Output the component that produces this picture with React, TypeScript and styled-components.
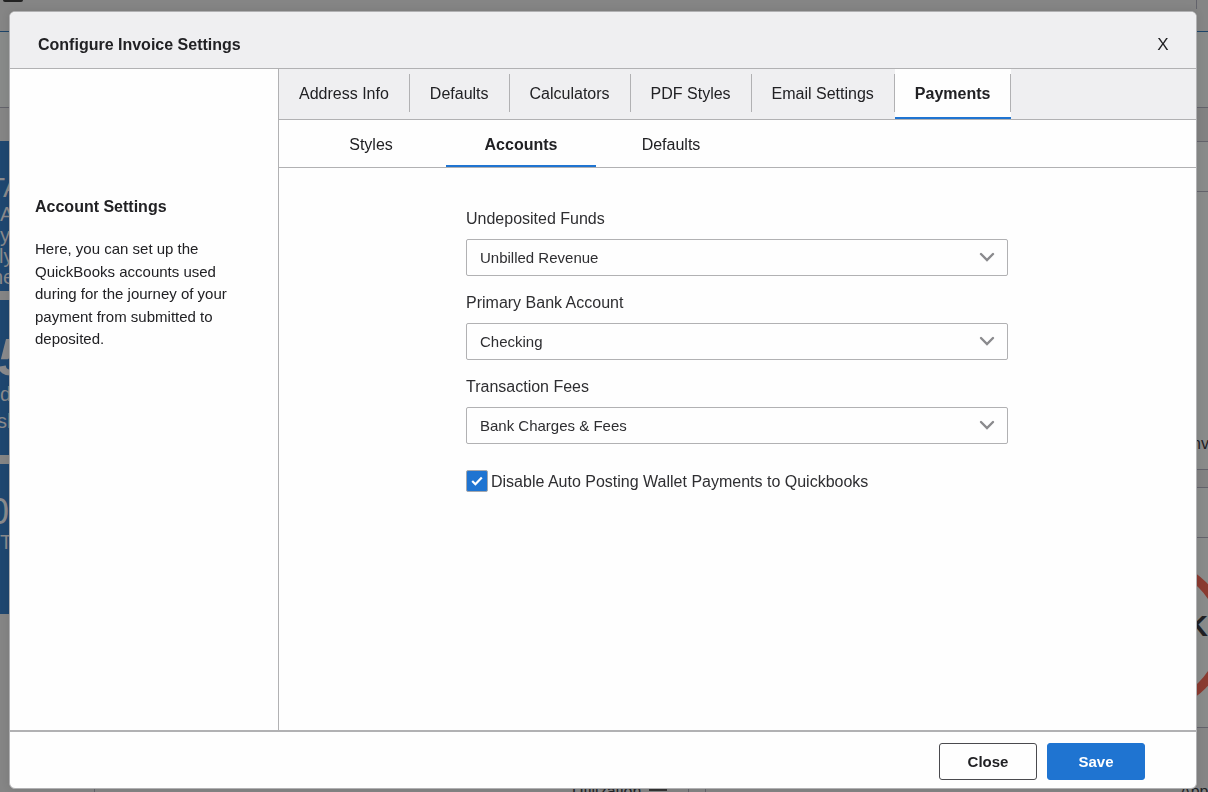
import React, { useState } from "react";
import styled, { createGlobalStyle, css } from "styled-components";

const line = "#b1b1b3";
const blue = "#1f74d1";
const ink = "#212124";
const dimLine = "#63636b";

const GlobalStyle = createGlobalStyle`
  *, *::before, *::after { box-sizing: border-box; }
  body {
    margin: 0;
    background: #858585;
    font-family: "Liberation Sans", Arial, Helvetica, sans-serif;
    font-size: 16px;
    color: ${ink};
    overflow: hidden;
  }
  button, input, select { font-family: inherit; color: inherit; }
`;

/* Dimmed dashboard under the dialog */

const Dashboard = styled.div`
  height: 100vh;
  display: flex;
  flex-direction: column;
  overflow: hidden;
`;

const TopBar = styled.div`
  display: flex;
  justify-content: space-between;
  height: 32px;
  flex: none;
  border-bottom: 1px solid #1d4469;
`;

const MenuMark = styled.div`
  width: 20px;
  height: 2px;
  margin-left: 3px;
  border-radius: 0 0 3px 3px;
  background: #222;
`;

const TopCell = styled.div`
  width: 12px;
  height: 9px;
  border-left: 1px solid ${dimLine};
`;

const FilterBar = styled.div`
  height: 76px;
  flex: none;
  border-bottom: 1px solid ${dimLine};
  background: #888a89;
`;

const Columns = styled.div`
  display: flex;
  justify-content: space-between;
  height: 676px;
  flex: none;
`;

const CardColumn = styled.div`
  display: flex;
  flex-direction: column;
  gap: 9px;
  width: 94px;
  padding-top: 33px;
`;

const Card = styled.div<{ $height: number; $top: number }>`
  height: ${(p) => p.$height}px;
  padding-top: ${(p) => p.$top}px;
  background: #1f4770;
  color: #8a8a8c;
  overflow: hidden;
  white-space: nowrap;
`;

const CardFigure = styled.div<{ $strong?: boolean }>`
  font-size: 36px;
  line-height: 40px;
  text-indent: -11px;
  ${(p) =>
    p.$strong &&
    css`
      font-size: 52px;
      font-weight: bold;
      font-style: italic;
      text-indent: -2px;
    `}
`;

const CardTitle = styled.div`
  font-size: 28px;
  line-height: 32px;
  text-indent: -12px;
`;

const CardText = styled.div<{ $line?: number; $cut?: number }>`
  font-size: 20px;
  line-height: ${(p) => p.$line ?? 21}px;
  text-indent: ${(p) => -(p.$cut ?? 0)}px;
`;

const SideColumn = styled.div`
  width: 12px;
  display: flex;
  flex-direction: column;
`;

const SideCell = styled.div<{ $height: number; $light?: boolean }>`
  display: flex;
  align-items: flex-end;
  height: ${(p) => p.$height}px;
  flex: none;
  overflow: hidden;
  border-bottom: 1px solid ${dimLine};
  background: ${(p) => (p.$light ? "#898b8a" : "#828282")};
`;

const SideText = styled.span`
  font-size: 16px;
  line-height: 18px;
  padding-bottom: 16px;
  text-indent: -4px;
`;

const Gauge = styled.svg`
  display: block;
  width: 12px;
  height: 189px;
`;

const BottomRow = styled.div`
  display: grid;
  grid-template-columns: 94px 478px 116px 17px 1fr auto;
  height: 20px;
  flex: none;
  line-height: 16px;
`;

const BottomCell = styled.div<{ $rule?: boolean }>`
  display: flex;
  gap: 8px;
  border-left: ${(p) => (p.$rule ? `1px solid ${dimLine}` : "0")};
`;

const Toggle = styled.span`
  width: 18px;
  height: 7px;
  border-bottom: 3px solid #333;
`;

const EndCell = styled.div`
  width: 28px;
`;

/* Dialog */

const Overlay = styled.div`
  position: fixed;
  inset: 0;
  display: flex;
  padding: 11px 11px 3px 9px;
`;

const Dialog = styled.div`
  flex: 1;
  min-width: 0;
  display: flex;
  flex-direction: column;
  border: 1px solid ${line};
  border-radius: 6px;
  background: #fefefe;
  overflow: hidden;
  box-shadow: 0 0 8px rgba(0, 0, 0, 0.1);
`;

const Header = styled.header`
  display: flex;
  align-items: center;
  justify-content: space-between;
  flex: none;
  height: 57px;
  padding: 10px 21px 0 28px;
  border-bottom: 1px solid ${line};
  background: #efeff1;
`;

const Title = styled.h1`
  margin: 0;
  font-size: 16px;
  line-height: 24px;
`;

const Dismiss = styled.button`
  width: 24px;
  height: 24px;
  padding: 0;
  border: 0;
  background: none;
  font-size: 17px;
  line-height: 24px;
  cursor: pointer;
`;

const Body = styled.div`
  flex: 1;
  min-height: 0;
  display: flex;
`;

const Aside = styled.aside`
  width: 269px;
  flex: none;
  padding: 126px 40px 0 25px;
  border-right: 1px solid ${line};
`;

const AsideTitle = styled.h2`
  margin: 0 0 19px;
  font-size: 16px;
  line-height: 24px;
`;

const AsideText = styled.p`
  margin: 0;
  font-size: 15px;
  line-height: 1.5;
`;

const Main = styled.main`
  flex: 1;
  min-width: 0;
`;

const Tabs = styled.nav`
  display: flex;
  height: 51px;
  border-bottom: 1px solid ${line};
  background: #efeff1;
`;

const Tab = styled.button<{ $active: boolean }>`
  height: 50px;
  padding: 2px 21px 0 20px;
  border: 0;
  border-bottom: 2px solid ${(p) => (p.$active ? blue : "transparent")};
  background: linear-gradient(${line}, ${line}) right 5px / 1px 38px no-repeat
    ${(p) => (p.$active ? "#fefefe" : "transparent")};
  font-size: 16px;
  font-weight: ${(p) => (p.$active ? "bold" : "normal")};
  cursor: pointer;
`;

const SubTabs = styled(Tabs)`
  height: 48px;
  padding-left: 17px;
  background: none;
`;

const SubTab = styled(Tab)`
  width: 150px;
  height: 47px;
  padding: 4px 20px 0;
  background: none;
`;

const Form = styled.form`
  max-width: 543px;
  margin: 0 auto;
  padding: 39px 1px 0 0;
  color: #2e2e31;
`;

const Field = styled.div`
  display: flex;
  flex-direction: column;
  gap: 8px;
  margin-bottom: 15px;
`;

const Label = styled.label`
  font-size: 16px;
  line-height: 24px;
`;

const SelectBox = styled.div`
  display: grid;
  align-items: center;
  & > * { grid-area: 1 / 1; }
`;

const Select = styled.select`
  appearance: none;
  width: 100%;
  height: 37px;
  padding: 0 40px 0 13px;
  border: 1px solid ${line};
  border-radius: 2px;
  background: #fefefe;
  font-size: 15px;
`;

const Chevron = styled.svg`
  justify-self: end;
  width: 16px;
  height: 10px;
  margin: 0 13px 2px 0;
  pointer-events: none;
`;

const CheckRow = styled.div`
  display: flex;
  align-items: flex-start;
  gap: 3px;
  padding-top: 11px;
`;

const CheckBox = styled.div`
  display: grid;
  place-items: center;
  & > * { grid-area: 1 / 1; }
`;

const CheckInput = styled.input`
  appearance: none;
  width: 22px;
  height: 22px;
  margin: 0;
  border: 1px solid #a5a8ae;
  border-radius: 2px;
  background: #fefefe;
  &:checked { background: ${blue}; }
`;

const Tick = styled.svg`
  width: 12px;
  height: 10px;
  pointer-events: none;
`;

const Footer = styled.footer`
  display: flex;
  justify-content: flex-end;
  align-items: center;
  gap: 10px;
  flex: none;
  height: 58px;
  padding: 2px 51px 0 0;
  border-top: 2px solid ${line};
`;

const Action = styled.button<{ $primary?: boolean }>`
  width: 98px;
  height: 37px;
  border: 1px solid ${(p) => (p.$primary ? blue : "#4a4a4e")};
  border-radius: 3px;
  background: ${(p) => (p.$primary ? blue : "#fefefe")};
  color: ${(p) => (p.$primary ? "#fff" : ink)};
  font-size: 15px;
  font-weight: bold;
  cursor: pointer;
`;

const tabs = ["Address Info", "Defaults", "Calculators", "PDF Styles", "Email Settings", "Payments"];
const subTabs = ["Styles", "Accounts", "Defaults"];
const fields = [
  { id: "undeposited", label: "Undeposited Funds", value: "Unbilled Revenue" },
  { id: "bank", label: "Primary Bank Account", value: "Checking" },
  { id: "fees", label: "Transaction Fees", value: "Bank Charges & Fees" },
];

function Background() {
  return (
    <Dashboard aria-hidden="true">
      <TopBar>
        <MenuMark />
        <TopCell />
      </TopBar>
      <FilterBar />
      <Columns>
        <CardColumn>
          <Card $height={150} $top={31}>
            <CardTitle>TA</CardTitle>
            <CardText>A</CardText>
            <CardText>y</CardText>
            <CardText $cut={1}>ly</CardText>
            <CardText $cut={8}>ne</CardText>
          </Card>
          <Card $height={155} $top={37}>
            <CardFigure $strong>5</CardFigure>
            <CardText $line={34}>di</CardText>
            <CardText $cut={3}>sk</CardText>
          </Card>
          <Card $height={150} $top={28}>
            <CardFigure>0</CardFigure>
            <CardText>T</CardText>
          </Card>
        </CardColumn>
        <SideColumn>
          <SideCell $height={34} />
          <SideCell $height={50} $light />
          <SideCell $height={278} $light>
            <SideText>nv</SideText>
          </SideCell>
          <SideCell $height={18} />
          <SideCell $height={50} $light />
          <SideCell $height={190} $light>
            <Gauge viewBox="0 0 12 189">
              <circle cx="-44" cy="97" r="71" fill="none" stroke="#8a3b31" strokeWidth="9" />
              <text x="-9" y="98" fontSize="29" fontWeight="bold" fill={ink}>K</text>
            </Gauge>
          </SideCell>
        </SideColumn>
      </Columns>
      <BottomRow>
        <BottomCell />
        <BottomCell $rule />
        <BottomCell>
          Utilization <Toggle />
        </BottomCell>
        <BottomCell $rule />
        <BottomCell $rule />
        <EndCell>App</EndCell>
      </BottomRow>
    </Dashboard>
  );
}

export default function App() {
  const [tab, setTab] = useState(5);
  const [subTab, setSubTab] = useState(1);
  const [disabled, setDisabled] = useState(true);

  return (
    <>
      <GlobalStyle />
      <Background />
      <Overlay>
        <Dialog role="dialog" aria-labelledby="dialog-title">
          <Header>
            <Title id="dialog-title">Configure Invoice Settings</Title>
            <Dismiss type="button" aria-label="Dismiss">X</Dismiss>
          </Header>
          <Body>
            <Aside>
              <AsideTitle>Account Settings</AsideTitle>
              <AsideText>
                Here, you can set up the QuickBooks accounts used during for the journey of your payment from
                submitted to deposited.
              </AsideText>
            </Aside>
            <Main>
              <Tabs>
                {tabs.map((name, i) => (
                  <Tab key={name} type="button" $active={i === tab} onClick={() => setTab(i)}>
                    {name}
                  </Tab>
                ))}
              </Tabs>
              <SubTabs>
                {subTabs.map((name, i) => (
                  <SubTab key={name} type="button" $active={i === subTab} onClick={() => setSubTab(i)}>
                    {name}
                  </SubTab>
                ))}
              </SubTabs>
              <Form>
                {fields.map((f) => (
                  <Field key={f.id}>
                    <Label htmlFor={f.id}>{f.label}</Label>
                    <SelectBox>
                      <Select id={f.id} defaultValue={f.value}>
                        <option>{f.value}</option>
                      </Select>
                      <Chevron viewBox="0 0 16 10">
                        <path d="M2 2l6 6 6-6" fill="none" stroke="#8a8a8d" strokeWidth="2.4" strokeLinecap="round" />
                      </Chevron>
                    </SelectBox>
                  </Field>
                ))}
                <CheckRow>
                  <CheckBox>
                    <CheckInput
                      id="disable-posting"
                      type="checkbox"
                      checked={disabled}
                      onChange={(e) => setDisabled(e.target.checked)}
                    />
                    {disabled && (
                      <Tick viewBox="0 0 12 10">
                        <path d="M1.2 5l3.2 3.2L10.8 1.4" fill="none" stroke="#fff" strokeWidth="2.2" />
                      </Tick>
                    )}
                  </CheckBox>
                  <Label htmlFor="disable-posting">Disable Auto Posting Wallet Payments to Quickbooks</Label>
                </CheckRow>
              </Form>
            </Main>
          </Body>
          <Footer>
            <Action type="button">Close</Action>
            <Action type="button" $primary>Save</Action>
          </Footer>
        </Dialog>
      </Overlay>
    </>
  );
}
